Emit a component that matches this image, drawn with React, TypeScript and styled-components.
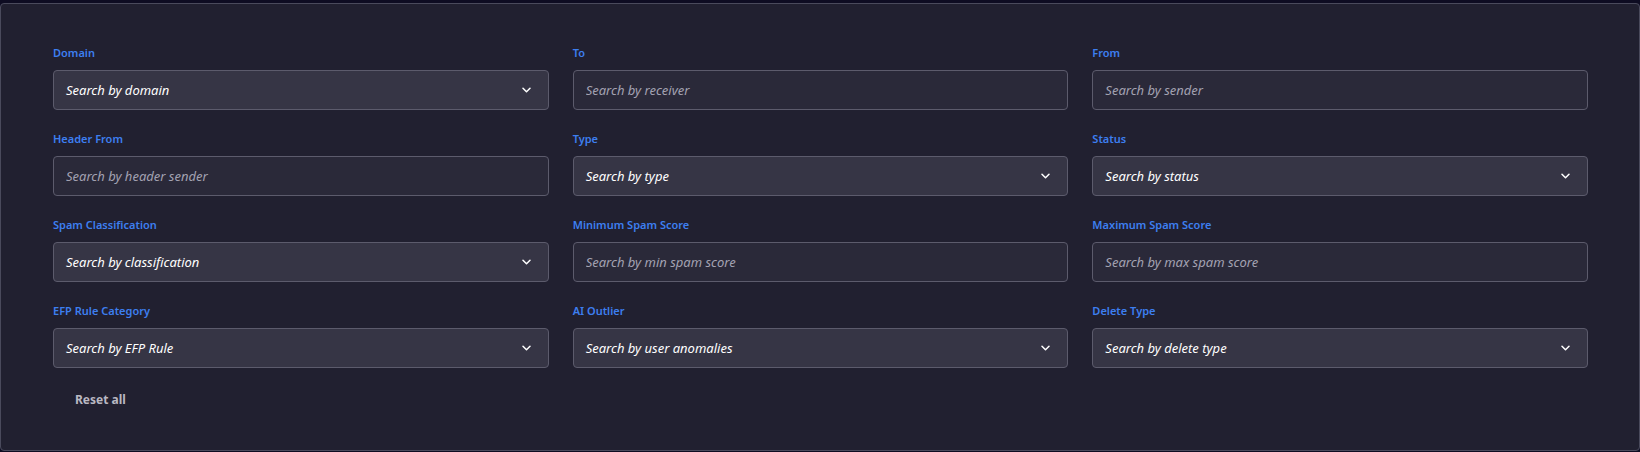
import React from 'react';
import styled, { createGlobalStyle } from 'styled-components';

type Field = {
	label: string;
	placeholder: string;
	select?: boolean;
};

const fields: Field[] = [
	{ label: 'Domain', placeholder: 'Search by domain', select: true },
	{ label: 'To', placeholder: 'Search by receiver' },
	{ label: 'From', placeholder: 'Search by sender' },
	{ label: 'Header From', placeholder: 'Search by header sender' },
	{ label: 'Type', placeholder: 'Search by type', select: true },
	{ label: 'Status', placeholder: 'Search by status', select: true },
	{ label: 'Spam Classification', placeholder: 'Search by classification', select: true },
	{ label: 'Minimum Spam Score', placeholder: 'Search by min spam score' },
	{ label: 'Maximum Spam Score', placeholder: 'Search by max spam score' },
	{ label: 'EFP Rule Category', placeholder: 'Search by EFP Rule', select: true },
	{ label: 'AI Outlier', placeholder: 'Search by user anomalies', select: true },
	{ label: 'Delete Type', placeholder: 'Search by delete type', select: true },
];

const Chevron: React.FC = () => (
	<svg width="9" height="6" viewBox="0 0 9 6" fill="none">
		<path d="M1 1.2l3.5 3.5 3.5-3.5" stroke="#fff" strokeWidth="1.5" strokeLinecap="round" strokeLinejoin="round" />
	</svg>
);

const App: React.FC = () => {
	return (
		<>
			<GlobalStyle />
			<Panel>
				<Grid>
					{fields.map((field) => (
						<FieldBox key={field.label}>
							<Label>{field.label}</Label>
							{field.select ? (
								<SelectBox>
									<SelectValue>{field.placeholder}</SelectValue>
									<Chevron />
								</SelectBox>
							) : (
								<TextInput type="text" placeholder={field.placeholder} />
							)}
						</FieldBox>
					))}
				</Grid>
				<ResetButton>Reset all</ResetButton>
			</Panel>
		</>
	);
};

export default App;

const GlobalStyle = createGlobalStyle`
	body {
		margin: 0;
		background: #0e0c22;
		font-family: 'Noto Sans', 'Open Sans', sans-serif;
	}
`;

const Panel = styled.div`
	margin-top: 3px;
	height: 448px;
	box-sizing: border-box;
	background: #212030;
	border: 1px solid #4a4a5c;
	border-radius: 4px;
	padding: 41px 51px 0 52px;
`;

const Grid = styled.div`
	display: grid;
	grid-template-columns: repeat(3, 1fr);
	column-gap: 24px;
	row-gap: 21px;
`;

const FieldBox = styled.div`
	display: flex;
	flex-direction: column;
	gap: 9px;
`;

const Label = styled.label`
	font-size: 11px;
	font-weight: 600;
	color: #3d7ff0;
	line-height: 16px;
`;

const SelectBox = styled.div`
	height: 40px;
	box-sizing: border-box;
	display: flex;
	align-items: center;
	justify-content: space-between;
	padding: 0 17px 0 12px;
	background: #363545;
	border: 1px solid #5c5b6c;
	border-radius: 4px;
	cursor: pointer;
`;

const SelectValue = styled.span`
	font-size: 13px;
	font-style: italic;
	color: #ffffff;
`;

const TextInput = styled.input`
	height: 40px;
	box-sizing: border-box;
	padding: 0 12px;
	background: #2a2939;
	border: 1px solid #5c5b6c;
	border-radius: 4px;
	font-family: inherit;
	font-size: 13px;
	font-style: italic;
	color: #fff;
	outline: none;

	&::placeholder {
		color: #a3a2b2;
	}
`;

const ResetButton = styled.button`
	margin: 23px 0 0 22px;
	padding: 0;
	background: none;
	border: 0;
	font-family: inherit;
	font-size: 12px;
	font-weight: 700;
	color: #b9b8c2;
	cursor: pointer;
`;
